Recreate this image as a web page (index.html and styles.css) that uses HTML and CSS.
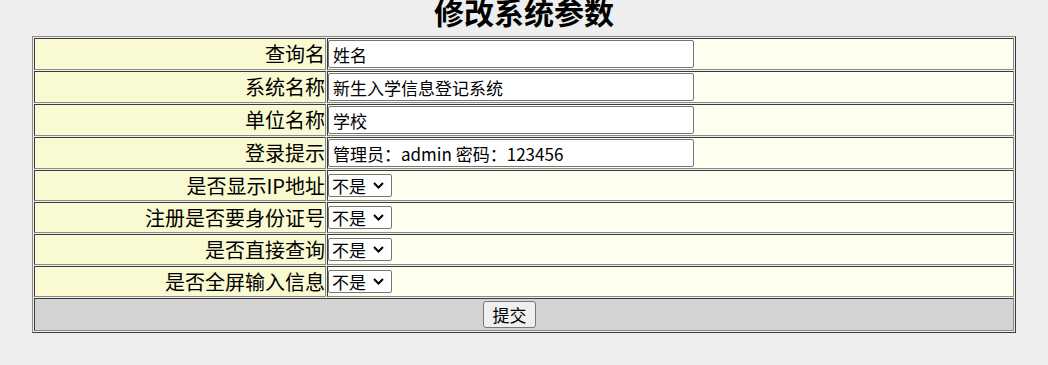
FILE: index.html
```html
<!DOCTYPE html>
<html lang="zh-CN">
<head>
  <meta charset="UTF-8">
  <title>修改系统参数</title>
  <link rel="stylesheet" href="styles.css">
</head>
<body>
  <h1 class="title">修改系统参数</h1>
  <form class="config-form">
    <table class="config-table">
      <tr>
        <td class="label">查询名</td>
        <td class="field"><input type="text" class="text-input" value="姓名"></td>
      </tr>
      <tr>
        <td class="label">系统名称</td>
        <td class="field"><input type="text" class="text-input" value="新生入学信息登记系统"></td>
      </tr>
      <tr>
        <td class="label">单位名称</td>
        <td class="field"><input type="text" class="text-input" value="学校"></td>
      </tr>
      <tr>
        <td class="label">登录提示</td>
        <td class="field"><input type="text" class="text-input" value="管理员：admin 密码：123456"></td>
      </tr>
      <tr class="select-row">
        <td class="label">是否显示IP地址</td>
        <td class="field">
          <select class="yes-no">
            <option>不是</option>
            <option>是</option>
          </select>
        </td>
      </tr>
      <tr class="select-row">
        <td class="label">注册是否要身份证号</td>
        <td class="field">
          <select class="yes-no">
            <option>不是</option>
            <option>是</option>
          </select>
        </td>
      </tr>
      <tr class="select-row">
        <td class="label">是否直接查询</td>
        <td class="field">
          <select class="yes-no">
            <option>不是</option>
            <option>是</option>
          </select>
        </td>
      </tr>
      <tr class="select-row">
        <td class="label">是否全屏输入信息</td>
        <td class="field">
          <select class="yes-no">
            <option>不是</option>
            <option>是</option>
          </select>
        </td>
      </tr>
      <tr>
        <td class="submit-cell" colspan="2"><button type="button" class="submit-btn">提交</button></td>
      </tr>
    </table>
  </form>
</body>
</html>
```

FILE: styles.css
```css
body {
  margin: 0;
  background-color: #eeeeee;
  color: #000000;
  font-family: "Microsoft YaHei", "Noto Sans CJK SC", "Liberation Sans", sans-serif;
}

.title {
  margin: -7px 0 0;
  font-size: 30px;
  line-height: 36px;
  font-weight: bold;
  text-align: center;
}

.config-form {
  margin: 0;
  padding-top: 7px;
}

.config-table {
  width: 984px;
  margin: 0 auto;
  border: 1px solid;
  border-color: #8a8a8a #3a3a3a #3a3a3a #8a8a8a;
  border-spacing: 1px;
}

.config-table td {
  border: 1px solid;
  border-color: #3a3a3a #8a8a8a #8a8a8a #3a3a3a;
  padding: 0;
}

.label {
  width: 290px;
  background-color: #fafad2;
  text-align: right;
  font-size: 20px;
  line-height: 30px;
  white-space: nowrap;
}

.field {
  background-color: #fffff0;
  height: 30px;
}

.select-row .field,
.select-row .label {
  height: 29px;
  line-height: 29px;
}

.text-input {
  display: block;
  box-sizing: border-box;
  width: 366px;
  height: 28px;
  margin: 0;
  padding: 1px 4px 0;
  font-family: "Microsoft YaHei", "Noto Sans CJK SC", "Liberation Sans", sans-serif;
  font-size: 17px;
  color: #000000;
  background-color: #ffffff;
  border: 1px solid #767676;
  border-radius: 2px;
}

/* native arrow replaced by a chevron like the Windows one */
.yes-no {
  display: block;
  box-sizing: border-box;
  width: 64px;
  height: 23px;
  margin: 0;
  padding: 0 0 0 3px;
  font-family: "Microsoft YaHei", "Noto Sans CJK SC", "Liberation Sans", sans-serif;
  font-size: 17px;
  line-height: 21px;
  color: #000000;
  -webkit-appearance: none;
  appearance: none;
  background-color: #ffffff;
  background-image: url("data:image/svg+xml,%3Csvg xmlns='http://www.w3.org/2000/svg' width='11' height='7' viewBox='0 0 11 7'%3E%3Cpath d='M1 1l4.5 4.5L10 1' fill='none' stroke='%23000' stroke-width='2'/%3E%3C/svg%3E");
  background-repeat: no-repeat;
  background-position: right 7px center;
  border: 1px solid #767676;
  border-radius: 2px;
}

.submit-cell {
  background-color: #d3d3d3;
  text-align: center;
  height: 31px;
  padding-right: 29px !important;
}

.submit-btn {
  box-sizing: border-box;
  width: 53px;
  height: 27px;
  padding: 0;
  font-family: "Microsoft YaHei", "Noto Sans CJK SC", "Liberation Sans", sans-serif;
  font-size: 17px;
  background-color: #efefef;
  border: 1px solid #767676;
  border-radius: 3px;
  cursor: pointer;
}
```
